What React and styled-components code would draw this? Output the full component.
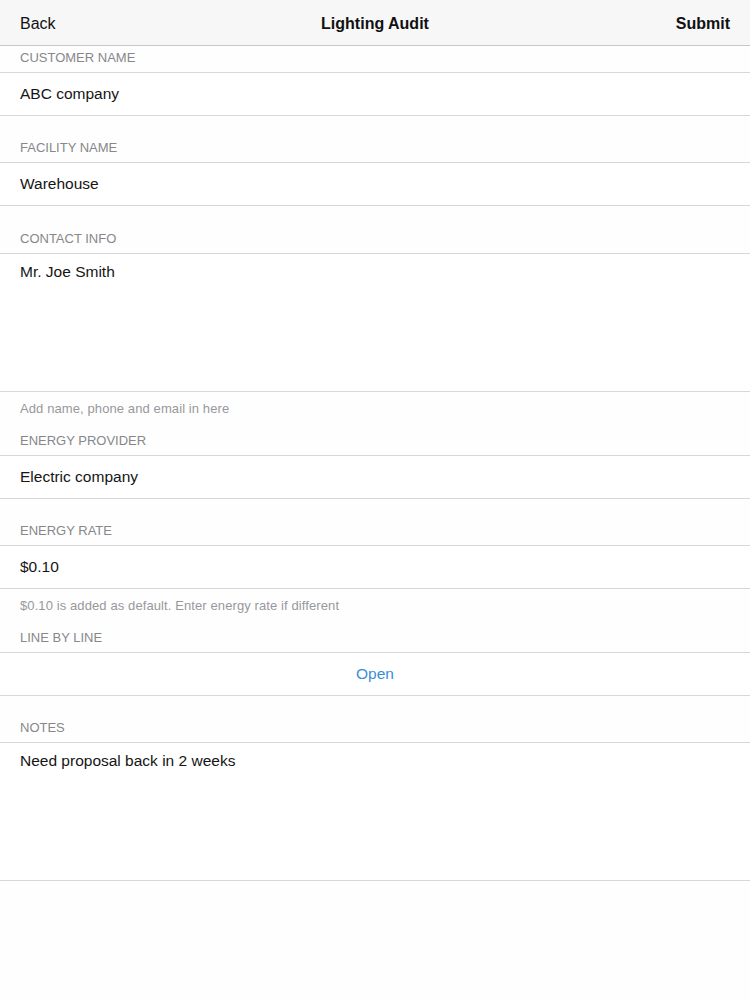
import React from "react";
import styled, { createGlobalStyle } from "styled-components";

const Global = createGlobalStyle`
  html, body { margin: 0; padding: 0; background: #fefefe; }
  body { font-family: "Liberation Sans", Arial, Helvetica, sans-serif; -webkit-font-smoothing: antialiased; }
  * { box-sizing: border-box; }
`;

const Page = styled.div`
  width: 750px;
  min-height: 1000px;
  background: #fefefe;
  display: flex;
  flex-direction: column;
`;

const NavBar = styled.header`
  height: 46px;
  background: #f7f7f8;
  border-bottom: 1px solid #c9c9cc;
  display: grid;
  grid-template-columns: 1fr auto 1fr;
  align-items: center;
  padding: 2px 20px 0;
`;

const NavButton = styled.span`
  font-size: 16px;
  color: #111;
  font-weight: ${(p) => (p.$bold ? 700 : 400)};
  justify-self: ${(p) => (p.$right ? "end" : "start")};
`;

const NavTitle = styled.span`
  font-size: 16px;
  font-weight: 700;
  color: #111;
`;

const Label = styled.div`
  height: ${(p) => p.$h}px;
  display: flex;
  align-items: flex-end;
  padding: 0 20px 7px;
  font-size: 13px;
  line-height: 14px;
  color: #87878b;
  text-transform: uppercase;
`;

const Cell = styled.div`
  height: ${(p) => p.$h || 44}px;
  border-top: 1px solid #d7d7da;
  border-bottom: 1px solid #d7d7da;
  display: flex;
  align-items: ${(p) => (p.$multi ? "flex-start" : "center")};
  justify-content: ${(p) => (p.$center ? "center" : "flex-start")};
  padding: ${(p) => (p.$multi ? "8px 20px 0" : "0 20px 1px")};
  font-size: 15.5px;
  line-height: 20px;
  color: ${(p) => (p.$link ? "#3a8fd2" : "#151515")};
  background: #fff;
`;

const Footer = styled.div`
  padding: 10px 20px 0;
  font-size: 13px;
  line-height: 14px;
  color: #98989c;
  letter-spacing: 0.1px;
`;

export default function App() {
  return (
    <>
      <Global />
      <Page>
        <NavBar>
          <NavButton>Back</NavButton>
          <NavTitle>Lighting Audit</NavTitle>
          <NavButton $bold $right>Submit</NavButton>
        </NavBar>

        <Label $h={26}>Customer Name</Label>
        <Cell>ABC company</Cell>

        <Label $h={46}>Facility Name</Label>
        <Cell>Warehouse</Cell>

        <Label $h={47}>Contact Info</Label>
        <Cell $h={139} $multi>Mr. Joe Smith</Cell>
        <Footer>Add name, phone and email in here</Footer>

        <Label $h={39}>Energy Provider</Label>
        <Cell>Electric company</Cell>

        <Label $h={46}>Energy Rate</Label>
        <Cell>$0.10</Cell>
        <Footer>$0.10 is added as default. Enter energy rate if different</Footer>

        <Label $h={39}>Line by Line</Label>
        <Cell $center $link>Open</Cell>

        <Label $h={46}>Notes</Label>
        <Cell $h={139} $multi>Need proposal back in 2 weeks</Cell>
      </Page>
    </>
  );
}
